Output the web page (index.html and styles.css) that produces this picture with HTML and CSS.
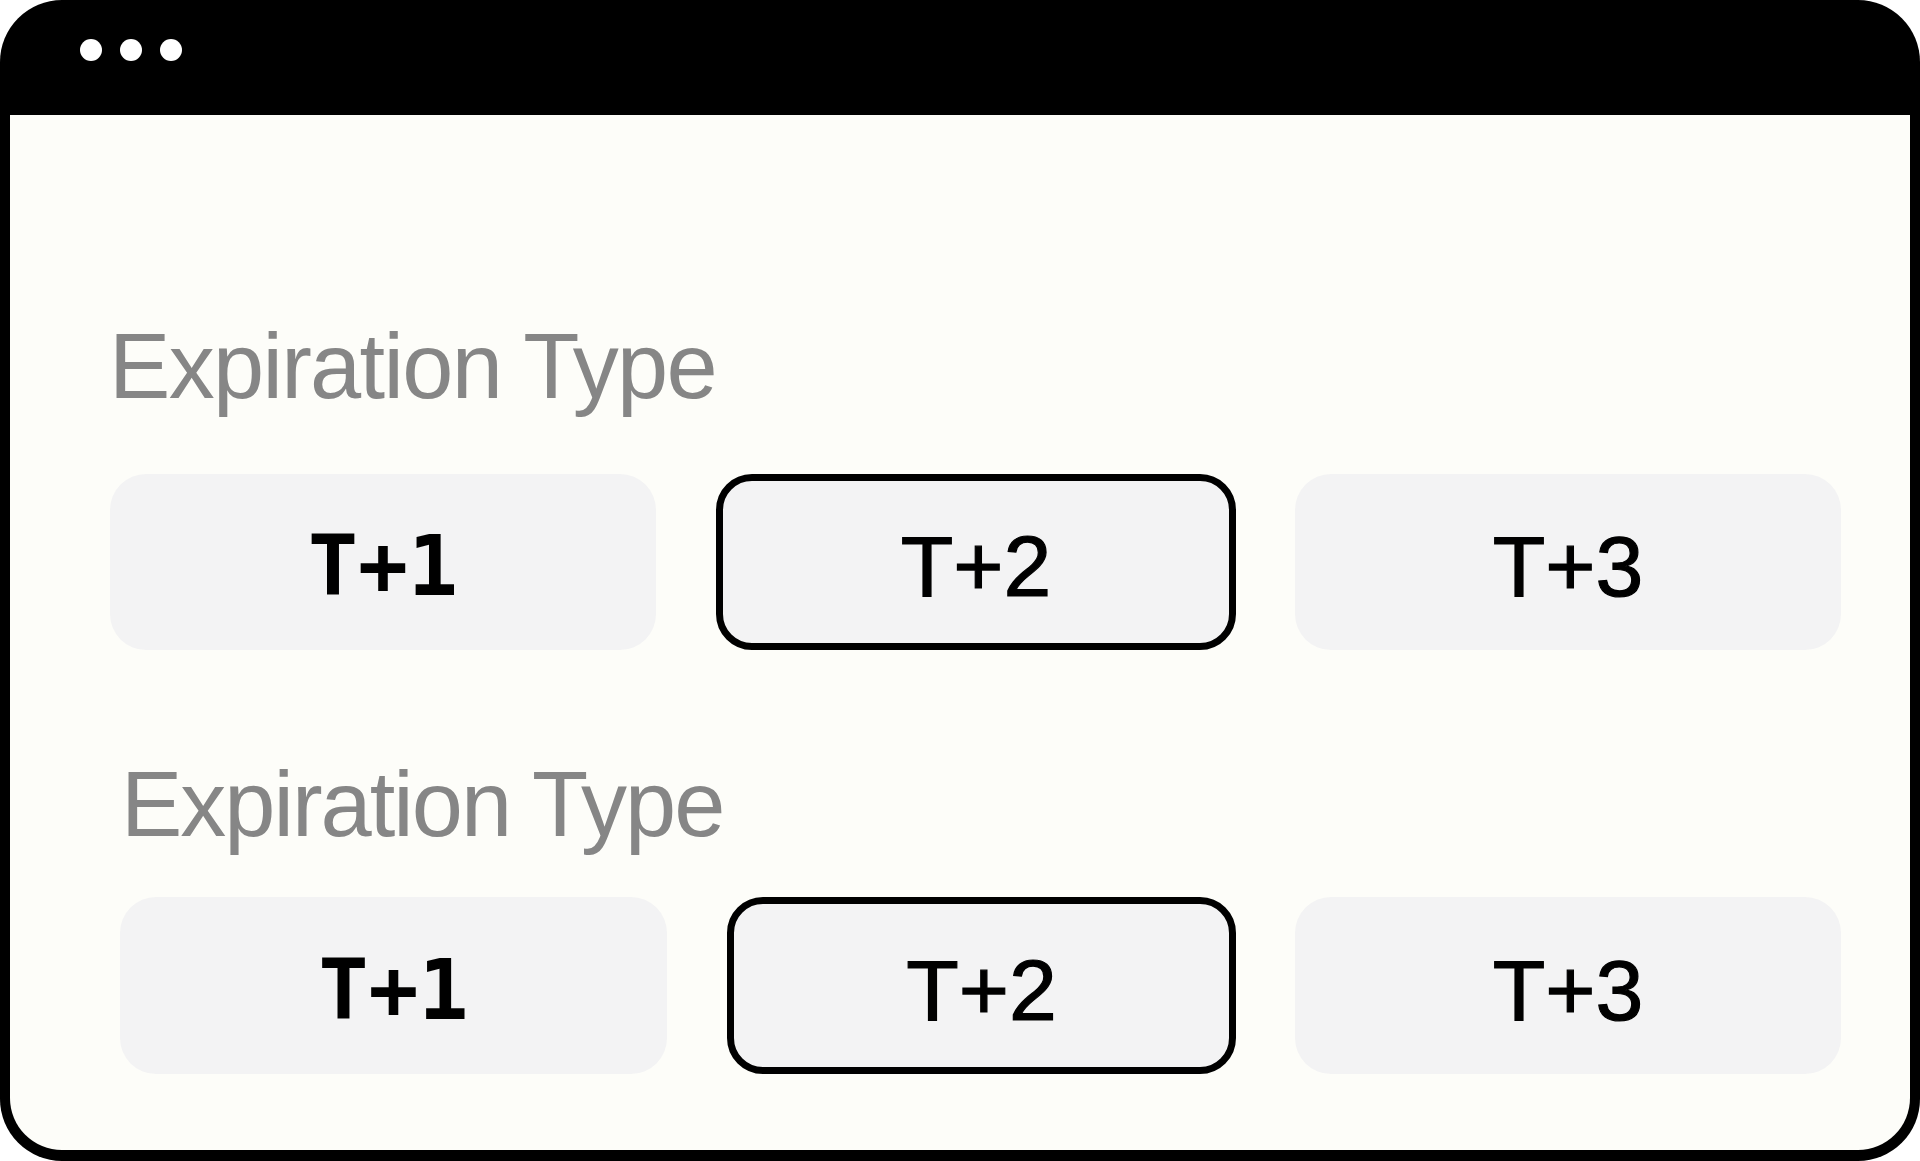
FILE: index.html
```html
<!DOCTYPE html>
<html lang="en">
<head>
<meta charset="utf-8">
<title>Expiration Type</title>
<link rel="stylesheet" href="styles.css">
</head>
<body>
<div class="window">
  <div class="titlebar">
    <span class="dot"></span><span class="dot"></span><span class="dot"></span>
  </div>
  <div class="content">
    <section class="group group-a">
      <h2 class="label">Expiration Type</h2>
      <div class="options">
        <div class="opt opt-wide mono">T+1</div>
        <div class="opt opt-mid selected">T+2</div>
        <div class="opt opt-wide">T+3</div>
      </div>
    </section>
    <section class="group group-b">
      <h2 class="label">Expiration Type</h2>
      <div class="options">
        <div class="opt opt-wide mono">T+1</div>
        <div class="opt opt-narrow selected">T+2</div>
        <div class="opt opt-wide">T+3</div>
      </div>
    </section>
  </div>
</div>
</body>
</html>
```

FILE: styles.css
```css
html, body {
  margin: 0;
  padding: 0;
  background: #ffffff;
}

body {
  width: 1920px;
  height: 1161px;
  overflow: hidden;
  font-family: "Liberation Sans", Arial, sans-serif;
}

.window {
  width: 1920px;
  height: 1161px;
  box-sizing: border-box;
  background: #000000;
  border-radius: 62px;
  display: flex;
  flex-direction: column;
  padding: 0 10px 11px 10px;
}

.titlebar {
  height: 115px;
  flex: none;
  display: flex;
  align-items: flex-start;
  gap: 18px;
  padding: 39px 0 0 70px;
  box-sizing: border-box;
}

.dot {
  width: 22px;
  height: 22px;
  border-radius: 50%;
  background: #ffffff;
}

.content {
  flex: 1;
  background: #fdfdf9;
  border-radius: 0 0 52px 52px;
  display: flex;
  flex-direction: column;
}

.group {
  display: flex;
  flex-direction: column;
}

.group-a {
  padding: 205px 0 0 0;
}

.group-b {
  padding: 108px 0 0 0;
}

.label {
  margin: 0;
  font-weight: 400;
  font-size: 92px;
  line-height: 92px;
  color: #868686;
  letter-spacing: -1.7px;
}

.group-a .label {
  padding-left: 99px;
  margin-bottom: 62px;
}

.group-b .label {
  padding-left: 111px;
  margin-bottom: 47px;
  letter-spacing: -2px;
}

.options {
  display: flex;
}

.group-a .options {
  padding-left: 100px;
}

.group-b .options {
  padding-left: 110px;
}

.opt {
  height: 176px;
  box-sizing: border-box;
  background: #f3f3f4;
  border-radius: 36px;
  display: flex;
  align-items: center;
  justify-content: center;
  font-family: "Liberation Sans", Arial, sans-serif;
  font-size: 86px;
  color: #000000;
  -webkit-text-stroke: 1.2px #000000;
  padding-top: 9px;
}

.opt + .opt {
  margin-left: 60px;
}

.opt + .opt + .opt {
  margin-left: 59px;
}

.group-b .opt {
  height: 177px;
}

.opt-wide {
  width: 546px;
}

.group-b .opt-wide:first-child {
  width: 547px;
}

.opt-mid {
  width: 520px;
}

.opt-narrow {
  width: 509px;
}

.mono {
  font-family: "DejaVu Sans Mono", monospace;
  font-weight: 700;
  font-size: 83px;
  -webkit-text-stroke: 0;
}

.selected {
  border: 7px solid #000000;
}
```
